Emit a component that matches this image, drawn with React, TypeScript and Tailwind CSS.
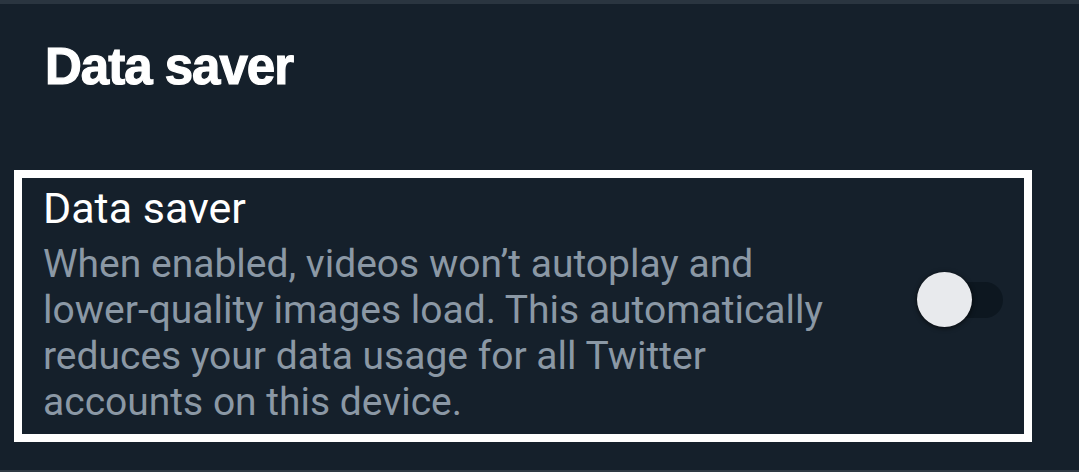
export default function App() {
    return (
        <div className="w-[1079px] h-[472px] bg-[#15202b] flex flex-col overflow-hidden">
            {/* top divider */}
            <div className="h-[4px] bg-[#2a3540]" />

            <div className="flex-1 flex flex-col">
                <h1 className="pl-[45px] mt-[37px] text-[51px] leading-[52px] font-bold tracking-[-1px] text-white font-['Liberation_Sans',sans-serif] [-webkit-text-stroke:1.2px_white]">
                    Data saver
                </h1>

                {/* highlighted setting row */}
                <div className="ml-[14px] mt-[77px] w-[1018px] h-[272px] border-[8px] border-white flex items-center font-['Roboto',sans-serif]">
                    <div className="flex-1 pl-[21px] pt-[5px] pb-[9px] self-start">
                        <div className="text-[43px] leading-[50px] text-white">Data saver</div>
                        <div className="mt-[8px] text-[39px] leading-[46px] text-[#8b98a5]">
                            <span className="block">When enabled, videos won’t autoplay and</span>
                            <span className="block">lower-quality images load. This automatically</span>
                            <span className="block">reduces your data usage for all Twitter</span>
                            <span className="block">accounts on this device.</span>
                        </div>
                    </div>

                    <div className="relative w-[86px] h-[55px] mr-[21px] -mt-[14px] shrink-0">
                        <div className="absolute right-0 top-[10px] w-[64px] h-[36px] rounded-full bg-[#0d1720]" />
                        <div className="absolute left-0 top-0 w-[55px] h-[55px] rounded-full bg-[#e8eaed] shadow-[0_1px_5px_rgba(0,0,0,0.7)]" />
                    </div>
                </div>
            </div>

            {/* bottom divider */}
            <div className="h-[2px] bg-[#2f3a44]" />
        </div>
    );
}
